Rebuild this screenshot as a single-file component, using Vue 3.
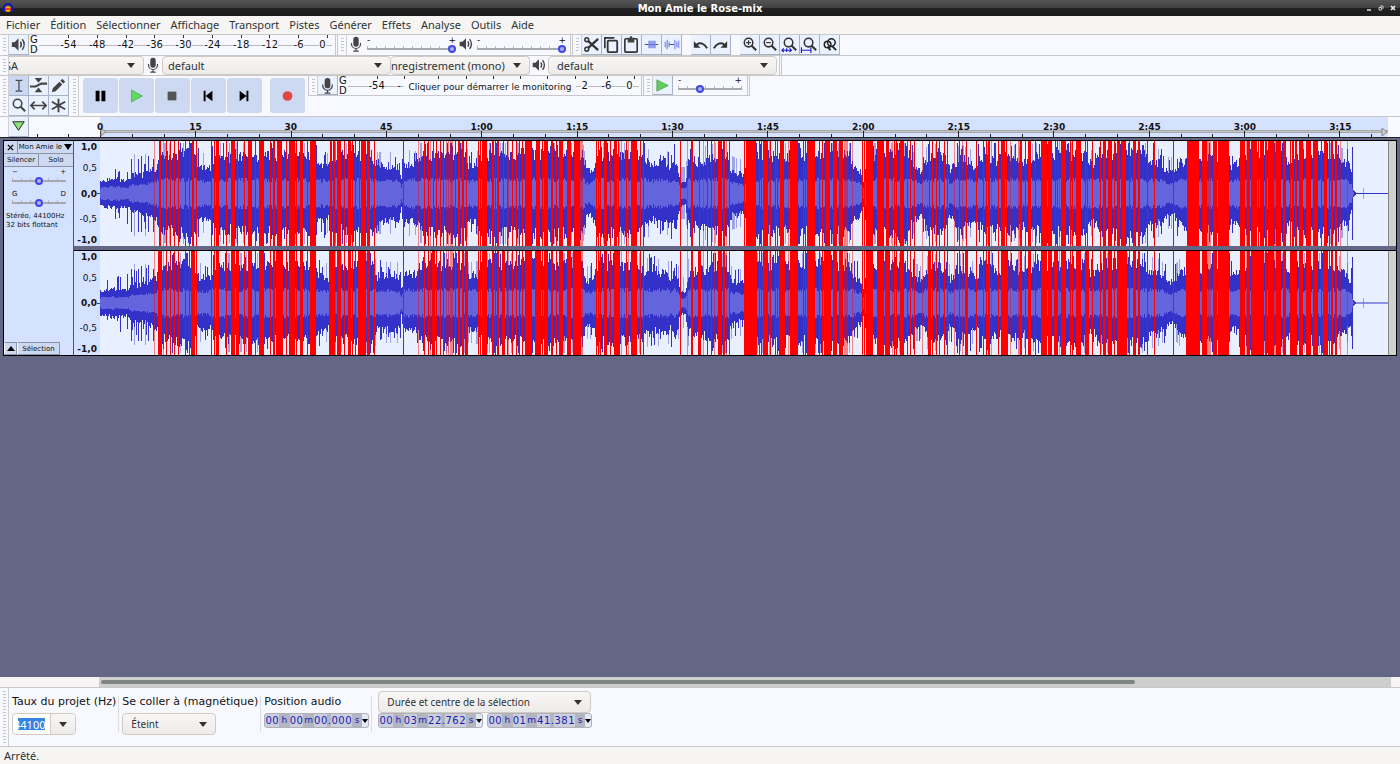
<template>
  <div class="app">
    <header class="titlebar">
      <svg class="title-logo" viewBox="0 0 12 12"><path d="M2 8V6a4 4 0 0 1 8 0v2" fill="none" stroke="#0a1ac0" stroke-width="2" /><circle cx="6" cy="7" r="3" fill="#ffa500" /><path d="M3 7h6" stroke="#e22" stroke-width="1.5" /><path d="M0 6h3v4H1zM9 6h3l-1 4H9z" fill="#0a1ac0" /></svg>
      <h1>Mon Amie le Rose-mix</h1>
      <div class="window-buttons">
        <button aria-label="Réduire"><svg viewBox="0 0 6 6"><path d="M1 5h4" stroke="#eee" stroke-width="1.4" /></svg></button>
        <button aria-label="Restaurer"><svg viewBox="0 0 6 6"><path d="M2 1h3v3M1 2.500h2.500V5H1z" stroke="#ccc" fill="none" /></svg></button>
        <button aria-label="Fermer"><svg viewBox="0 0 6 6"><path d="M1 1l4 4M5 1L1 5" stroke="#eee" stroke-width="1.700" /></svg></button>
      </div>
    </header>

    <nav class="menubar">
      <button v-for="item in menus" :key="item">{{ item }}</button>
    </nav>

    <!-- Meters, mixer, edit tools -->
    <div class="row row-meters">
      <i class="grip"></i>
      <button class="tool" aria-label="Lecture"><svg viewBox="0 0 20 20" v-html="icons.speaker"></svg></button>
      <div class="channels"><span>G</span><span>D</span></div>
      <div class="meter">
        <div v-for="db in levels" :key="db" class="meter-mark"><span>{{ db }}</span></div>
      </div>
      <i class="divider"></i>
      <i class="grip"></i>
      <svg class="mixer-icon" viewBox="0 0 20 20" v-html="icons.mic"></svg>
      <label class="slider slider-mixer">
        <b>-</b><b>+</b>
        <input type="range" min="0" max="100" value="100" aria-label="Volume d'enregistrement">
      </label>
      <svg class="mixer-icon" viewBox="0 0 20 20" v-html="icons.speaker"></svg>
      <label class="slider slider-mixer">
        <b>-</b><b>+</b>
        <input type="range" min="0" max="100" value="100" aria-label="Volume de lecture">
      </label>
      <i class="divider"></i>
      <i class="grip"></i>
      <div v-for="(group, g) in editGroups" :key="g" class="tool-group">
        <button v-for="name in group" :key="name" class="tool" :aria-label="name">
          <svg viewBox="0 0 20 20" v-html="icons[name]"></svg>
        </button>
      </div>
    </div>

    <!-- Devices -->
    <div class="row row-devices">
      <i class="grip"></i>
      <select class="device host" aria-label="Hôte audio"><option>SA</option></select>
      <svg class="device-icon" viewBox="0 0 20 20" v-html="icons.mic"></svg>
      <select class="device input-device" aria-label="Entrée"><option>default</option></select>
      <select class="device input-mode" aria-label="Canaux"><option>nregistrement (mono)</option></select>
      <svg class="device-icon" viewBox="0 0 20 20" v-html="icons.speaker"></svg>
      <select class="device output-device" aria-label="Sortie"><option>default</option></select>
      <i class="divider"></i>
    </div>

    <div class="row row-transport">
      <i class="grip"></i>
      <div class="tools">
        <button v-for="name in tools" :key="name" class="tool" :class="{ active: name === 'cursor' }" :aria-label="name">
          <svg viewBox="0 0 20 20" v-html="icons[name]"></svg>
        </button>
      </div>
      <i class="grip"></i>
      <div class="transport">
        <button v-for="name in transport" :key="name" :class="name" :aria-label="name">
          <svg viewBox="0 0 36 36" v-html="icons[name]"></svg>
        </button>
      </div>
      <div class="recording">
        <i class="grip"></i>
        <button class="tool" aria-label="Enregistrement"><svg viewBox="0 0 20 20" v-html="icons.mic"></svg></button>
        <div class="channels"><span>G</span><span>D</span></div>
        <div class="meter">
          <div v-for="(db, i) in recordLevels" :key="i" class="meter-mark" :class="{ before: i === 1, after: i === 7 }">
            <span v-if="db">{{ db }}</span>
          </div>
          <button class="monitor">Cliquer pour démarrer le monitoring</button>
        </div>
        <i class="divider"></i>
        <i class="grip"></i>
        <button class="tool" aria-label="Lire à vitesse"><svg viewBox="0 0 20 20" v-html="icons.smallPlay"></svg></button>
        <label class="slider slider-speed">
          <b>-</b><b>+</b>
          <input type="range" min="0" max="100" value="32" aria-label="Vitesse">
        </label>
        <i class="divider"></i>
      </div>
    </div>

    <div class="row row-timeline">
      <i class="grip plain"></i>
      <button class="tool" aria-label="Tête de lecture"><svg viewBox="0 0 20 20"><path d="M4 5h12l-6 9z" fill="#8be07a" stroke="#222" /></svg></button>
      <div class="pre-ruler"></div>
      <div class="ruler">
        <svg viewBox="0 0 1288 20" preserveAspectRatio="none">
          <path d="M0 14.500h1288" stroke="#a4a6aa" stroke-width="3" />
          <path d="M0 14.500h1288" stroke="#c6c6c6" />
          <path :d="ticks" stroke="#222" />
          <path d="M1 11v8l5-4z" fill="#ccc" stroke="#888" />
          <path d="M1282 11v8l5-4z" fill="#ccc" stroke="#888" />
        </svg>
        <div class="ruler-labels"><span v-for="t in times" :key="t">{{ t }}</span></div>
      </div>
    </div>

    <main class="tracks">
      <section class="track">
        <div class="panel">
          <div class="panel-row head">
            <button class="close" aria-label="Fermer la piste"><svg viewBox="0 0 8 8"><path d="M1 1l6 6M7 1L1 7" stroke="#000" stroke-width="1.500" /></svg></button>
            <button class="name">Mon Amie le<svg viewBox="0 0 8 6"><path d="M0 0h8L4 6z" /></svg></button>
          </div>
          <div class="panel-row">
            <button>Silencer</button><button>Solo</button>
          </div>
          <label class="slider slider-track">
            <b>−</b><b>+</b>
            <input type="range" min="0" max="100" value="50" aria-label="Gain">
          </label>
          <label class="slider slider-track">
            <b>G</b><b>D</b>
            <input type="range" min="0" max="100" value="50" aria-label="Panoramique">
          </label>
          <p>Stéréo, 44100Hz<br>32 bits flottant</p>
          <div class="panel-foot">
            <button class="collapse" aria-label="Réduire la piste"><svg viewBox="0 0 10 6"><path d="M0 6h10L5 0z" /></svg></button>
            <button>Sélection</button>
          </div>
        </div>
        <div class="channel-list">
          <div v-for="wave in waves" :key="wave.id" class="channel">
            <div class="scale">
              <b>1,0</b><span>0,5</span><b>0,0</b><span>-0,5</span><b>-1,0</b>
            </div>
            <svg class="wave" viewBox="0 0 1288 105" preserveAspectRatio="none">
              <path :d="wave.thin" fill="#3232c8" opacity="0.400" />
              <path :d="wave.peak" fill="#3232c8" />
              <path :d="wave.rms" fill="#6464dc" />
              <path d="M1254 52.500h34" stroke="#3232c8" />
              <path :d="wave.soft" fill="#f00" opacity="0.450" />
              <path :d="wave.clip" fill="#f00" />
            </svg>
            <div class="track-end"></div>
          </div>
        </div>
      </section>
    </main>

    <div class="scrollbar"><div class="scroll-track"><div class="scroll-thumb"></div></div></div>

    <footer class="selection">
      <i class="grip"></i>
      <div class="field">
        <label for="rate">Taux du projet (Hz)</label>
        <div class="combo">
          <div class="combo-text"><input id="rate" type="text" value="44100"></div>
          <button aria-label="Choisir un taux"><svg viewBox="0 0 8 5"><path d="M0 0h8L4 5z" fill="#333" /></svg></button>
        </div>
      </div>
      <div class="field">
        <label for="snap">Se coller à (magnétique)</label>
        <select id="snap" class="snap"><option>Éteint</option></select>
      </div>
      <div class="field">
        <label>Position audio</label>
        <div class="time" role="group" aria-label="Position audio">
          <span v-for="(c, i) in clocks[0]" :key="i" :class="cellClass(c)">{{ c }}</span>
          <button aria-label="Format"><svg viewBox="0 0 6 4"><path d="M0 0h6L3 4z" /></svg></button>
        </div>
      </div>
      <div class="field range">
        <select class="mode" aria-label="Type de sélection"><option>Durée et centre de la sélection</option></select>
        <div class="time-pair">
          <div v-for="n in [1, 2]" :key="n" class="time" role="group">
            <span v-for="(c, i) in clocks[n]" :key="i" :class="cellClass(c)">{{ c }}</span>
            <button aria-label="Format"><svg viewBox="0 0 6 4"><path d="M0 0h6L3 4z" /></svg></button>
          </div>
        </div>
      </div>
    </footer>
    <div class="status">Arrêté.</div>
  </div>
</template>

<script setup>
const menus = ['Fichier', 'Édition', 'Sélectionner', 'Affichage', 'Transport', 'Pistes', 'Générer', 'Effets', 'Analyse', 'Outils', 'Aide']
const levels = ['-54', '-48', '-42', '-36', '-30', '-24', '-18', '-12', '-6', '0']
// the monitoring prompt lies over the middle of the scale
const recordLevels = ['-54', '-', '', '', '', '', '', '2', '-6', '0']
const editGroups = [['cut', 'copy', 'paste', 'trim', 'silence'], ['undo', 'redo'], ['zoomIn', 'zoomOut', 'zoomSel', 'zoomFit', 'zoomToggle']]
const tools = ['cursor', 'envelope', 'draw', 'zoom', 'shift', 'multi']
const transport = ['pause', 'play', 'stop', 'start', 'end', 'record']
const times = ['0', '15', '30', '45', '1:00', '1:15', '1:30', '1:45', '2:00', '2:15', '2:30', '2:45', '3:00', '3:15']
const clocks = ['00h00m00.000s', '00h03m22.762s', '00h01m41.381s'].map(t => t.split(''))

const cellClass = (c) => {
  if (c === '.') return 'dot'
  return /\d/.test(c) ? 'digit' : 'unit'
}

const lens = '<circle cx="9" cy="8" r="4.500" fill="none" stroke="#333" stroke-width="1.600"/><path d="M12 11l5 5" stroke="#333" stroke-width="2.200"/>'
const icons = {
  speaker: '<path d="M3 7.500h3l4-4v13l-4-4H3z" fill="#444"/><path d="M12 7q2 3 0 6M14 4.500q4 5.500 0 11" fill="none" stroke="#444" stroke-width="1.500"/>',
  mic: '<rect x="7" y="2" width="6" height="11" rx="3" fill="#444"/><path d="M5 9v1a5 5 0 0 0 10 0V9M10 15v3M7 18h6" fill="none" stroke="#444" stroke-width="1.300"/>',
  cut: '<path d="M6 6l11 10M6 14L17 4" stroke="#333" stroke-width="2.400"/><circle cx="5" cy="5" r="2" fill="#eaf1ff" stroke="#333" stroke-width="1.600"/><circle cx="5" cy="15" r="2" fill="#eaf1ff" stroke="#333" stroke-width="1.600"/>',
  copy: '<path d="M3 14V3h10" fill="none" stroke="#333" stroke-width="1.700"/><rect x="6" y="6" width="10" height="12" rx="1" fill="none" stroke="#333" stroke-width="1.900"/>',
  paste: '<rect x="3" y="4" width="13" height="14" rx="1" fill="none" stroke="#333" stroke-width="1.700"/><path d="M6 3h2l1-2h1l1 2h2v5H6z" fill="#444"/>',
  trim: '<path d="M3 10h14" stroke="#444"/><path d="M7.500 6v8M9.500 6v8M11.500 6v8M13.500 6v8" stroke="#7582e8" stroke-width="1.500"/>',
  silence: '<path d="M7 10h6" stroke="#444"/><path d="M3.500 7v6M5.500 5v10M7.500 7v6M13.500 5v10M15.500 7v6M17.500 6v8" stroke="#8d98ec" stroke-width="1.500"/>',
  undo: '<path d="M6 10q6-4 11 4" fill="none" stroke="#333" stroke-width="1.900"/><path d="M3 6.500v7h7z" fill="#333"/>',
  redo: '<path d="M14 10q-6-4-11 4" fill="none" stroke="#333" stroke-width="1.900"/><path d="M17 6.500v7h-7z" fill="#333"/>',
  zoomIn: lens + '<path d="M6.500 8h5M9 5.500v5" stroke="#333" stroke-width="1.200"/>',
  zoomOut: lens + '<path d="M6.500 8h5" stroke="#333" stroke-width="1.200"/>',
  zoomSel: lens + '<path d="M2 16h10M4 14l-2 2 2 2M10 14l2 2-2 2M7 14v4" fill="none" stroke="#1a1ac8" stroke-width="1.200"/>',
  zoomFit: lens + '<path d="M1 16h11M1.500 13v6M11.500 13v6" fill="none" stroke="#1a1ac8" stroke-width="1.200"/>',
  zoomToggle: '<circle cx="8" cy="10" r="3.500" fill="none" stroke="#222" stroke-width="1.600"/><circle cx="12" cy="8" r="4" fill="none" stroke="#222" stroke-width="1.600"/><path d="M8 12l3 4M13 12l4 4" stroke="#222" stroke-width="2"/>',
  zoom: lens.replaceAll('#333', '#444'),
  cursor: '<path d="M7 4.500h3m1 0h3M7 16h3m1 0h3M10.500 4.500V16" fill="none" stroke="#444" stroke-width="1.300"/>',
  envelope: '<path d="M1 11h6l6-3h6" fill="none" stroke="#444" stroke-width="2.200"/><path d="M6 2h8l-4 5zM6 17h8l-4-5z" fill="#444"/>',
  draw: '<path d="M3 17l1-4 7-7 3 3-7 7zM12 5l2-2 3 3-2 2z" fill="#444"/>',
  shift: '<path d="M2 10h16M6 6l-4 4 4 4M14 6l4 4-4 4" fill="none" stroke="#444" stroke-width="1.800"/>',
  multi: '<path d="M10 3v14M3 6l14 8M17 6L3 14" stroke="#444" stroke-width="2"/>',
  smallPlay: '<path d="M4 4l12 6-12 6z" fill="#5fce5f" stroke="#3a8a3a" stroke-width="0.600"/>',
  pause: '<path d="M13 13h4v11h-4zM19 13h4v11h-4z"/>',
  play: '<path d="M13 12.500l11 6-11 6z" fill="#62d962" stroke="#449944" stroke-width="0.700"/>',
  stop: '<path d="M13 14h9v9h-9z" fill="#555"/>',
  start: '<path d="M13 13h2v11h-2zM22 13v11l-7-5.500z"/>',
  end: '<path d="M20 13h2v11h-2zM13 13v11l7-5.500z"/>',
  record: '<circle cx="18" cy="18.500" r="5" fill="#e14545"/>'
}

// one tick every five seconds, longer every fifteen
let ticks = ''
for (let i = 0; i <= 40; i++) {
  const x = Math.round(i * 31.78) + 0.5
  ticks += `M${x} ${i % 3 ? 17 : 14}V20`
}

// envelope as [x, peak level]
const envelope = [[0, 0.22], [12, 0.27], [28, 0.24], [31, 0.34], [42, 0.34], [56, 0.46], [60, 0.66], [94, 0.76], [97, 0.48], [110, 0.48], [116, 0.66],
  [215, 0.7], [217, 0.52], [229, 0.46], [232, 0.66], [272, 0.7], [276, 0.5], [299, 0.5], [301, 0.25], [304, 0.54], [316, 0.52], [320, 0.68],
  [364, 0.74], [368, 0.5], [377, 0.52], [380, 0.7], [482, 0.74], [485, 0.42], [492, 0.42], [497, 0.7], [538, 0.7], [544, 0.6], [553, 0.5], [562, 0.6],
  [570, 0.48], [576, 0.62], [580, 0.22], [585, 0.2], [588, 0.55], [600, 0.58], [626, 0.74], [631, 0.42], [644, 0.34], [648, 0.68],
  [750, 0.7], [754, 0.46], [760, 0.4], [763, 0.25], [768, 0.7], [804, 0.74], [812, 0.52], [821, 0.4], [828, 0.66], [844, 0.66], [850, 0.42],
  [860, 0.66], [876, 0.48], [886, 0.72], [900, 0.54], [905, 0.72], [920, 0.58], [940, 0.7], [985, 0.7], [992, 0.5], [1002, 0.72],
  [1042, 0.72], [1050, 0.6], [1060, 0.54], [1069, 0.38], [1074, 0.42], [1079, 0.56], [1090, 0.62], [1128, 0.7], [1131, 0.48], [1138, 0.55], [1144, 0.7],
  [1185, 0.7], [1189, 0.5], [1194, 0.72], [1230, 0.7], [1238, 0.62], [1246, 0.52], [1251, 0.35], [1253, 0.06], [1256, 0.01]]

// [first column, width] of the clipped stretches
const clipped = [[59, 2], [66, 1], [70, 1], [74, 1], [78, 1], [85, 1], [89, 1], [92, 2], [96, 1], [111, 1], [114, 1], [116, 3], [126, 1], [131, 4], [137, 1],
  [144, 1], [148, 4], [155, 1], [159, 5], [170, 1], [173, 2], [177, 5], [186, 1], [189, 6], [196, 1], [200, 3], [207, 1], [210, 6], [230, 2], [233, 2],
  [237, 4], [244, 1], [248, 3], [252, 1], [255, 1], [259, 1], [261, 5], [267, 3], [274, 1], [303, 1], [324, 1], [328, 1], [333, 1], [336, 1], [340, 1],
  [343, 1], [355, 1], [358, 2], [362, 2], [366, 1], [378, 1], [380, 1], [382, 5], [392, 2], [395, 1], [397, 2], [403, 1], [407, 1], [412, 1], [416, 1],
  [419, 1], [422, 1], [425, 7], [436, 4], [442, 1], [444, 4], [451, 2], [456, 1], [459, 4], [467, 4], [474, 6], [496, 1], [498, 1], [500, 1], [504, 3],
  [510, 1], [514, 3], [518, 1], [526, 1], [531, 6], [540, 1], [543, 1], [580, 1], [591, 2], [599, 1], [607, 1], [611, 1], [618, 4], [623, 2], [629, 1],
  [644, 1], [646, 10], [659, 1], [661, 1], [663, 5], [670, 1], [675, 1], [677, 1], [680, 4], [690, 8], [703, 1], [705, 1], [707, 8], [719, 1], [722, 1],
  [725, 5], [733, 4], [739, 4], [762, 1], [764, 1], [766, 7], [777, 7], [786, 3], [794, 1], [796, 1], [800, 4], [807, 1], [810, 1], [814, 1], [829, 1],
  [832, 1], [836, 1], [839, 1], [844, 1], [847, 1], [859, 1], [866, 1], [876, 1], [883, 1], [886, 1], [888, 2], [898, 1], [901, 4], [906, 1], [920, 2],
  [925, 1], [928, 3], [935, 1], [941, 6], [948, 4], [955, 1], [957, 1], [961, 5], [970, 1], [972, 1], [976, 5], [985, 1], [987, 1], [992, 1], [1000, 1],
  [1003, 3], [1008, 4], [1014, 1], [1017, 3], [1021, 5], [1029, 1], [1033, 3], [1038, 2], [1047, 1], [1054, 1], [1073, 1], [1087, 12], [1102, 5],
  [1113, 4], [1118, 11], [1140, 5], [1147, 3], [1151, 6], [1158, 1], [1160, 4], [1165, 2], [1168, 6], [1176, 5], [1183, 3], [1190, 1], [1192, 2],
  [1195, 2], [1199, 4], [1206, 1], [1207, 4], [1213, 5], [1221, 1], [1224, 3], [1229, 1], [1231, 2], [1235, 2]]
const halfClipped = [[54, 1], [63, 1], [214, 1], [235, 1], [350, 1], [318, 1], [330, 1], [346, 1], [348, 1], [351, 2], [408, 1], [480, 3], [521, 1], [528, 1],
  [587, 1], [603, 1], [614, 1], [626, 1], [669, 1], [688, 1], [744, 4], [752, 1], [792, 1], [822, 1], [854, 1], [862, 1], [891, 1], [910, 1], [918, 2],
  [959, 1], [1107, 4], [1146, 1], [1174, 2], [1240, 1], [1247, 1]]
const earlySpikes = [31, 34, 38, 41, 45, 48, 53]

const levelAt = (x) => {
  const i = envelope.findIndex(p => p[0] > x)
  if (i < 0) return 0.01
  const [x0, a] = envelope[i - 1]
  const [x1, b] = envelope[i]
  return a + (b - a) * (x - x0) / (x1 - x0)
}

const column = (x, up, down = up) => {
  const top = Math.round(52.5 - up * 52)
  return `M${x} ${top}h1V${Math.round(52.5 + down * 52)}h-1z`
}

const bars = (list) => list.map(([x, w]) => `M${x} 0h${w}v105h-${w}z`).join('')

const buildWave = (id, seed) => {
  let state = seed
  const random = () => {
    state = (state * 16807) % 2147483647
    return state / 2147483647
  }
  let peak = ''
  let rms = ''
  let thin = ''
  for (let x = 0; x < 1256; x++) {
    const level = levelAt(x)
    const r = random()
    let up = level * (0.88 + random() * 0.34)
    let down = level * (0.88 + random() * 0.34)
    if (r > 0.84 && x < 1252) {
      up = Math.min(0.97, up + 0.08 + random() * 0.28)
      down = Math.min(0.97, down + 0.05 + random() * 0.28)
    }
    if (r < 0.12 && x > 60 && x < 1250) {
      thin += column(x, Math.min(0.98, level + 0.3), Math.min(0.98, level + 0.28))
    }
    peak += column(x, up, down)
    const body = Math.min(0.27, level * 0.5) * (0.82 + random() * 0.3)
    if (level > 0.05) rms += column(x, body)
  }
  earlySpikes.forEach((x, i) => {
    if (i % 3 === 1) thin += column(x, 0.76, 0.82)
    else peak += column(x, 0.66 + (i % 2) * 0.06, 0.74)
  })
  peak += column(1252, 0.9, 0.9)
  thin += column(1263, 0.1, 0.1)
  const clip = id === 1 ? clipped : clipped.map(([x, w], i) => (i % 7 === 0 ? [x - 1, w + 2] : [x, w]))
  return { id, peak, rms, thin, clip: bars(clip), soft: bars(halfClipped) }
}

const waves = [buildWave(1, 4217), buildWave(2, 9031)]
</script>

<style>
body {
  margin: 0;
  background: #f6f5f4;
}
</style>

<style scoped>
.app {
  display: flex;
  flex-direction: column;
  min-height: 100vh;
  background: #f8f9ff;
  color: #111;
  font-family: "DejaVu Sans", sans-serif;
  font-size: 10px;
}

.app * {
  box-sizing: border-box;
}

button {
  font: inherit;
  color: inherit;
  margin: 0;
  padding: 0;
  border: 0;
  background: none;
}

svg {
  display: block;
}

/* Title and menu */
.titlebar {
  display: flex;
  align-items: center;
  justify-content: space-between;
  height: 16px;
  padding: 0 4px 0 2px;
  background: linear-gradient(#555 0, #404040 50%, #222 51%, #1c1c1c 100%);
}

.titlebar h1 {
  margin: 0;
  font-size: 10px;
  line-height: 15px;
  color: #fff;
}

.title-logo {
  width: 12px;
  height: 12px;
  margin-right: 20px;
}

.window-buttons {
  display: flex;
  gap: 6px;
}

.window-buttons svg {
  width: 6px;
  height: 6px;
}

.menubar {
  display: flex;
  height: 18px;
  padding-left: 1px;
  background: #f6f5f4;
  font-family: "Noto Sans", sans-serif;
  font-size: 11px;
  line-height: 18px;
  color: #2e3436;
}

.menubar button {
  padding: 0 5px;
}

/* Toolbars */
.row {
  display: flex;
  align-items: stretch;
  border-top: 1px solid #c8c8c8;
}

.grip {
  flex: none;
  width: 9px;
  border-right: 1px solid #d0d0d4;
  background: repeating-linear-gradient(#c4c6cc 0 1px, transparent 1px 3px) 3px 3px / 3px calc(100% - 5px) no-repeat;
}

.grip.plain {
  background: none;
}

.divider {
  flex: none;
  width: 3px;
  border-left: 1px solid #c8c8cc;
  border-right: 1px solid #c8c8cc;
}

.tool {
  flex: none;
  width: 20px;
  height: 20px;
  background: #eaf1ff;
  border-right: 1px solid #a8b2c6;
  border-bottom: 1px solid #a8b2c6;
}

.tool svg {
  width: 19px;
  height: 19px;
}

.tool.active {
  background: #cad8f2;
}

.row-meters {
  height: 21px;
}

.row-devices {
  height: 20px;
}

.channels {
  display: flex;
  flex-direction: column;
  width: 10px;
  padding-left: 1px;
  line-height: 10px;
  font-size: 10px;
}

.meter {
  position: relative;
  display: flex;
  flex: none;
  width: 293px;
  height: 20px;
  padding-left: 15px;
  background: linear-gradient(#bbb, #bbb) 0 10px / 100% 1px no-repeat;
}

.meter-mark {
  flex: 1;
  display: flex;
  justify-content: center;
  background: linear-gradient(#333, #333) 14px 0 / 1px 3px no-repeat;
}

.meter-mark.before {
  justify-content: flex-start;
  padding-left: 7px;
}

.meter-mark.after {
  justify-content: flex-end;
  padding-right: 5px;
}

.meter-mark:last-child,
.recording .meter-mark:nth-child(10) {
  flex: 0 0 19px;
}

.meter-mark span {
  margin-top: 4px;
  line-height: 12px;
  height: 12px;
  background: #f8f9ff;
}

.monitor {
  position: absolute;
  left: 56px;
  top: 4px;
  height: 13px;
  width: 172px;
  font-size: 9px;
  line-height: 12px;
  white-space: nowrap;
  background: #f8f9ff;
}

.row-meters .divider {
  margin-left: 3px;
}

.mixer-icon {
  width: 18px;
  height: 18px;
}

.slider {
  display: flex;
  flex-wrap: wrap;
  justify-content: space-between;
  align-content: flex-start;
  font-size: 9px;
  line-height: 5px;
}

.slider b {
  font-weight: 400;
}

.slider input {
  appearance: none;
  flex: 0 0 100%;
  width: 100%;
  height: 10px;
  margin: 0;
  background:
    linear-gradient(#a8a8b0, #a8a8b0) 0 5px / 100% 2px no-repeat,
    repeating-linear-gradient(90deg, #b8b8be 0 1px, transparent 1px 9px) 0 3px / 100% 2px no-repeat;
}

.slider input::-webkit-slider-thumb {
  appearance: none;
  width: 8px;
  height: 8px;
  margin-top: 2px;
  border: 2px solid #4048e8;
  border-radius: 50%;
  background: #a8b4e8;
}

.slider-mixer {
  width: 89px;
  margin: 3px 1px 0 2px;
}

.tool-group {
  display: flex;
  margin-right: 9px;
}

/* Device bar */
.device,
.snap,
.mode {
  appearance: none;
  border: 1px solid #cfcac4;
  border-radius: 4px;
  font-family: "Noto Sans", sans-serif;
  font-size: 11px;
  color: #2e3436;
  background:
    url("data:image/svg+xml,%3Csvg xmlns='http://www.w3.org/2000/svg' width='8' height='5'%3E%3Cpath d='M0 0h8L4 5z' fill='%23333'/%3E%3C/svg%3E") right 8px center no-repeat,
    linear-gradient(#f8f7f6, #edebe9);
}

.device {
  height: 19px;
  padding: 0 16px 0 5px;
}

.device-icon {
  width: 18px;
  height: 18px;
}

.host {
  width: 135px;
  border-left: 0;
  border-radius: 0 4px 4px 0;
  padding-left: 0;
  text-indent: -4px;
}

.input-device {
  width: 229px;
}

.input-mode {
  width: 139px;
  padding-left: 0;
  border-left: 0;
}

.output-device {
  width: 229px;
  padding-left: 8px;
  margin-right: 2px;
}

/* Transport */
.row-transport {
  height: 41px;
}

.tools {
  display: grid;
  grid-template-columns: repeat(3, 20px);
  margin-right: 1px;
}

.transport {
  display: flex;
  gap: 1px;
  padding: 2px 3px 0 4px;
}

.transport button {
  width: 35px;
  height: 35px;
  border-radius: 3px;
  background: #ccd9f0;
}

.transport svg {
  width: 35px;
  height: 35px;
}

.transport .record {
  margin-left: 7px;
}

.recording {
  display: flex;
  height: 20px;
  border-left: 1px solid #c8c8cc;
  border-bottom: 1px solid #c8c8cc;
}

.recording .tool {
  height: 19px;
}

.recording .meter {
  width: 291px;
}

.recording .divider {
  margin-left: 2px;
}

.slider-speed {
  width: 64px;
  margin: 2px 3px 0 5px;
}

/* Timeline */
.row-timeline {
  height: 21px;
}

.pre-ruler {
  width: 71px;
  background:
    linear-gradient(#222, #222) 8px 17px / 1px 3px no-repeat,
    linear-gradient(#222, #222) 39px 17px / 1px 3px no-repeat;
}

.ruler {
  position: relative;
  flex: 1;
  margin-right: 12px;
  background: #d4e2ff;
}

.ruler > svg {
  position: absolute;
  inset: 0;
  width: 100%;
  height: 100%;
}

.ruler-labels {
  position: relative;
  display: flex;
  margin-left: -3.7%;
  font-size: 9px;
  font-weight: 700;
  line-height: 20px;
}

.ruler-labels span {
  flex: 1;
  text-align: center;
}

/* Tracks */
.tracks {
  flex: 1;
  padding: 2px 3px 0;
  border-top: 1px solid #222;
  background: #636785;
}

.track {
  display: flex;
  border: 1px solid #000;
}

.panel {
  display: flex;
  flex-direction: column;
  flex: none;
  width: 70px;
  background: #d4e2ff;
  border-right: 1px solid #555;
  font-size: 7px;
}

.panel-row {
  display: flex;
  height: 13px;
  border-bottom: 1px solid #8a93a8;
}

.panel-row button {
  flex: 1;
  background: #ccd9f0;
}

.panel-row button + button {
  border-left: 1px solid #8a93a8;
}

.panel-row .close {
  flex: 0 0 13px;
}

.close svg {
  width: 7px;
  height: 7px;
  margin: auto;
}

.panel-row .name {
  display: flex;
  align-items: center;
  justify-content: center;
  gap: 2px;
}

.name svg {
  width: 8px;
  height: 6px;
}

.slider-track {
  margin: 3px 7px 4px 8px;
  font-size: 7px;
}

.panel p {
  margin: 1px 0 0 2px;
  line-height: 9px;
  white-space: nowrap;
}

.panel-foot {
  display: flex;
  height: 13px;
  margin-top: auto;
}

.panel-foot button {
  width: 43px;
  background: #ccd9f0;
  border: 1px solid #8a93a8;
  border-left-color: #fff;
}

.panel-foot .collapse {
  width: 13px;
}

.collapse svg {
  width: 8px;
  height: 5px;
  margin: auto;
}

.channel-list {
  display: flex;
  flex: 1;
  flex-direction: column;
  gap: 4px;
  background: #636785;
}

.channel {
  display: flex;
  height: 105px;
}

.channel + .channel {
  border-top: 1px solid #000;
}

.scale {
  display: flex;
  flex: none;
  flex-direction: column;
  justify-content: space-between;
  width: 26px;
  padding-right: 3px;
  text-align: right;
  font-size: 9px;
  line-height: 12px;
  background: linear-gradient(#444, #444) 23px 52px / 3px 1px no-repeat #d4e2ff;
}

.scale b:nth-child(3) {
  margin: 4px 0;
}

.wave {
  flex: 1;
  width: 0;
  height: 100%;
  background: #e8f0ff;
  shape-rendering: crispEdges;
}

.track-end {
  width: 8px;
  background: #d0d0d0;
  border-left: 1px solid #888;
}

/* Scrollbar */
.scrollbar {
  height: 10px;
  padding: 0 9px 0 99px;
  background: #f6f5f4;
}

.scroll-track {
  height: 10px;
  padding: 3px 2px;
  background: #cecece;
}

.scroll-thumb {
  width: 80.3%;
  height: 4px;
  border-radius: 2px;
  background: #7f8583;
}

/* Selection bar */
.selection {
  display: flex;
  height: 60px;
  gap: 3px;
  border-top: 1px solid #c8c8cc;
  border-bottom: 1px solid #c8c8cc;
}

.field {
  display: flex;
  flex-direction: column;
  gap: 4px;
  padding: 6px 3px 0 0;
  background: linear-gradient(#dcdde4, #dcdde4) right 8px / 1px 36px no-repeat;
}

.field.range {
  padding: 3px 0 0 3px;
  gap: 0;
  background: none;
}

.field > label {
  height: 15px;
  font-size: 11px;
  line-height: 15px;
  white-space: nowrap;
}

.combo {
  display: flex;
  width: 64px;
  height: 22px;
  border: 1px solid #cfcac4;
  border-radius: 4px;
  background: #fff;
  overflow: hidden;
}

.combo-text {
  flex: 1;
  display: flex;
  align-items: center;
  padding: 0 5px;
}

.combo input {
  width: 27px;
  height: 12px;
  padding: 0;
  border: 0;
  background: #3584e4;
  color: #fff;
  font-size: 11px;
  font-family: "Noto Sans", sans-serif;
  text-indent: -4px;
}

.combo button {
  width: 26px;
  border-left: 1px solid #cfcac4;
  background: linear-gradient(#f8f7f6, #edebe9);
}

.combo svg {
  width: 8px;
  height: 5px;
  margin: auto;
}

.snap {
  width: 94px;
  height: 22px;
  padding: 0 8px;
  font-size: 10px;
}

.mode {
  width: 213px;
  height: 22px;
  padding: 0 8px;
  font-size: 10px;
}

.time-pair {
  display: flex;
  gap: 4px;
}

.time {
  display: flex;
  width: 105px;
  height: 15px;
  border: 1px solid #b0b2b8;
  border-radius: 3px;
  background: #b2b6c2;
  overflow: hidden;
  color: #1a1ab4;
  line-height: 13px;
  text-align: center;
}

.time .digit {
  width: 7px;
  background: #ccd0dc;
}

.time .unit {
  width: 11px;
  font-size: 9px;
}

.time .dot {
  width: 4px;
}

.time button {
  flex: 1;
  background: #e4e8f4;
}

.time svg {
  width: 6px;
  height: 4px;
  margin: auto;
}

.status {
  height: 17px;
  padding-left: 4px;
  background: #f6f5f4;
  font-family: "Noto Sans", sans-serif;
  font-size: 11px;
  line-height: 17px;
  color: #2e3436;
}
</style>
